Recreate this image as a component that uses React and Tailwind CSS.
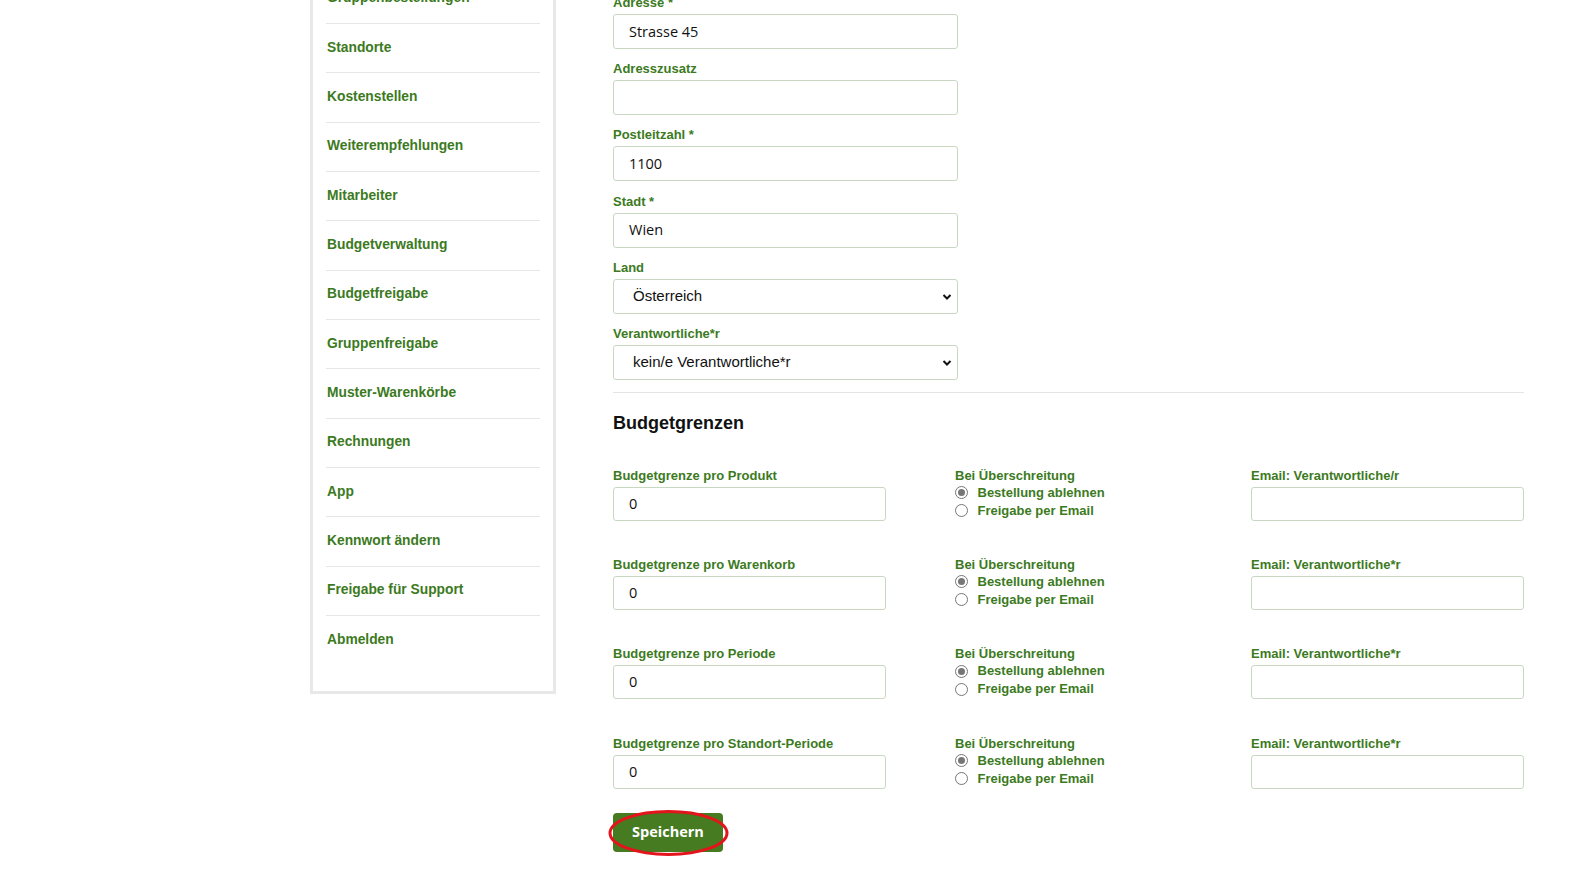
import React from "react";

const green = "text-[#3c7a1e]";

const navItems = [
  "Gruppenbestellungen",
  "Standorte",
  "Kostenstellen",
  "Weiterempfehlungen",
  "Mitarbeiter",
  "Budgetverwaltung",
  "Budgetfreigabe",
  "Gruppenfreigabe",
  "Muster-Warenkörbe",
  "Rechnungen",
  "App",
  "Kennwort ändern",
  "Freigabe für Support",
  "Abmelden",
];

function Label({ children }) {
  return (
    <div className={`h-[16px] leading-[16px] text-[13px] font-bold ${green} whitespace-nowrap`}>
      {children}
    </div>
  );
}

function TextField({ label, value }) {
  return (
    <div className="mb-[12.2px]">
      <Label>{label}</Label>
      <div className="mt-[3px] h-[35px] w-[345px] border border-[#c9d8c2] rounded-[3px] bg-white flex items-center pl-[15px] text-[14.5px] text-[#111] font-['Open_Sans',sans-serif]">
        {value}
      </div>
    </div>
  );
}

function SelectField({ label, value }) {
  return (
    <div className="mb-[12.2px]">
      <Label>{label}</Label>
      <div className="relative mt-[3px] h-[35px] w-[345px] border border-[#c9d8c2] rounded-[3px] bg-white flex items-center pl-[19px] text-[15px] text-[#111] font-['Liberation_Sans',Arial,sans-serif]">
        {value}
        <svg
          className="absolute right-[5px] top-[13px]"
          width="10"
          height="8"
          viewBox="0 0 10 8"
        >
          <path d="M1.5 2 L5 5.5 L8.5 2" stroke="#111" strokeWidth="2" fill="none" />
        </svg>
      </div>
    </div>
  );
}

function Radio({ checked, label }) {
  return (
    <div className="h-[18px] flex items-center">
      <span className="w-[13px] h-[13px] rounded-full border border-[#767676] bg-white flex items-center justify-center ml-[-0.5px]">
        {checked && <span className="w-[7px] h-[7px] rounded-full bg-[#767676]" />}
      </span>
      <span className={`ml-[10px] text-[13px] font-bold ${green} whitespace-nowrap`}>{label}</span>
    </div>
  );
}

function BudgetRow({ label, emailLabel, last }) {
  return (
    <div className={`flex ${last ? "" : "mb-[36.3px]"}`}>
      <div className="w-[342px]">
        <Label>{label}</Label>
        <div className="mt-[3px] h-[34px] w-[273px] border border-[#c9d8c2] rounded-[3px] bg-white flex items-center pl-[15px] text-[14.5px] text-[#111] font-['Open_Sans',sans-serif]">
          0
        </div>
      </div>
      <div className="w-[296px]">
        <Label>Bei Überschreitung</Label>
        <Radio checked label="Bestellung ablehnen" />
        <Radio label="Freigabe per Email" />
      </div>
      <div className="w-[273px]">
        <Label>{emailLabel}</Label>
        <div className="mt-[3px] h-[34px] w-[273px] border border-[#c9d8c2] rounded-[3px] bg-white" />
      </div>
    </div>
  );
}

export default function App() {
  return (
    <div className="bg-white min-h-screen overflow-hidden font-['Liberation_Sans',Arial,sans-serif]">
      <div className="flex items-start mt-[-25.33px] pl-[310px]">
        <aside className="w-[246px] border-x-[3px] border-b-[3px] border-[#e8e8e8] px-[13px] pb-[26px] bg-white">
          {navItems.map((item, i) => (
            <div
              key={item}
              className={`h-[49.33px] flex items-center text-[13.8px] font-bold ${green} ${
                i < navItems.length - 1 ? "border-b border-[#e6e6e6]" : ""
              }`}
            >
              <span className="pl-[1px]">{item}</span>
            </div>
          ))}
        </aside>

        <main className="ml-[57px] w-[911px] pt-[20.33px]">
          <TextField label="Adresse *" value="Strasse 45" />
          <TextField label="Adresszusatz" value="" />
          <TextField label="Postleitzahl *" value="1100" />
          <TextField label="Stadt *" value="Wien" />
          <SelectField label="Land" value="Österreich" />
          <SelectField label="Verantwortliche*r" value="kein/e Verantwortliche*r" />

          <div className="mt-[2.5px] border-t border-[#e5e5e5]" />

          <h2 className="mt-[18px] h-[24px] leading-[24px] text-[18px] font-bold text-[#111]">
            Budgetgrenzen
          </h2>

          <div className="mt-[32.5px]">
            <BudgetRow label="Budgetgrenze pro Produkt" emailLabel="Email: Verantwortliche/r" />
            <BudgetRow label="Budgetgrenze pro Warenkorb" emailLabel="Email: Verantwortliche*r" />
            <BudgetRow label="Budgetgrenze pro Periode" emailLabel="Email: Verantwortliche*r" />
            <BudgetRow label="Budgetgrenze pro Standort-Periode" emailLabel="Email: Verantwortliche*r" last />
          </div>

          <div className="relative mt-[24px] w-[110px] h-[39px]">
            <button className="w-[110px] h-[39px] rounded-[4px] bg-[#467b22] text-white text-[14.5px] font-bold font-['Open_Sans',sans-serif]">
              Speichern
            </button>
            <svg
              className="absolute left-[-5px] top-[-4px] pointer-events-none"
              width="121"
              height="48"
              viewBox="0 0 121 48"
            >
              <ellipse cx="60.5" cy="24" rx="58.5" ry="21.5" fill="none" stroke="#e3141c" strokeWidth="3" />
            </svg>
          </div>
        </main>
      </div>
    </div>
  );
}
